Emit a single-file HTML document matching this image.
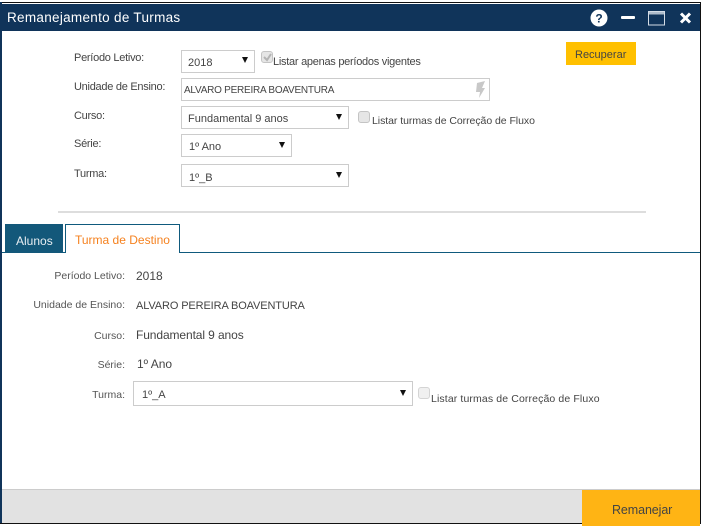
<!DOCTYPE html>
<html><head><meta charset="utf-8"><style>
html,body{margin:0;padding:0;background:#fff}
body{width:703px;height:526px;position:relative;overflow:hidden;font-family:"Liberation Sans",sans-serif;font-size:11px;color:#444}
div{position:absolute;box-sizing:border-box}
.t{white-space:nowrap;line-height:14px}
.n{letter-spacing:-.27px}
.f{background:#fff;border:1px solid #ccc}
.a{position:absolute;width:0;height:0;border-left:3.5px solid transparent;border-right:3.5px solid transparent;border-top:6px solid #111}
.c{width:12px;height:12px;border:1px solid #c4c4c4;border-radius:3px;background:#e6e6e6}
</style></head><body>
<div style="left:0;top:2px;width:701px;height:1px;background:#111"></div>
<div style="left:0;top:2px;width:2px;height:522px;background:#10345a"></div>
<div style="left:700px;top:2px;width:1px;height:522px;background:#111"></div>
<div style="left:0;top:4px;width:700px;height:27px;background:#10345a"></div>
<div class="t" style="left:7px;top:11px;color:#fff;font-size:13.5px;letter-spacing:.3px">Remanejamento de Turmas</div>
<svg style="position:absolute;left:585px;top:5px" width="110" height="26" viewBox="0 0 110 26">
<circle cx="14" cy="13" r="8.5" fill="#fff"/>
<text x="14" y="17.5" text-anchor="middle" font-family="Liberation Sans" font-weight="bold" font-size="12" fill="#10345a">?</text>
<rect x="36" y="11" width="14" height="3" rx="1" fill="#fff"/>
<rect x="63.5" y="6.5" width="16" height="13.5" fill="none" stroke="#d4dde6" stroke-width="1"/>
<rect x="64" y="7" width="15" height="2.5" fill="#aebccb"/>
<path d="M96 8.500l9 9M105 8.500l-9 9" stroke="#fff" stroke-width="3"/>
</svg>
<div class="t n" style="left:74px;top:51px">Período Letivo:</div>
<div class="f" style="left:181px;top:50px;width:74px;height:23px"></div>
<div class="t" style="left:188px;top:56px">2018</div><div class="a" style="left:242px;top:57px"></div>
<div class="c" style="left:261px;top:51px"></div>
<svg style="position:absolute;left:262px;top:52px" width="12" height="12"><path d="M2 5l3 3 4-6" fill="none" stroke="#b4b4b4" stroke-width="2"/></svg>
<div class="t n" style="left:273px;top:55px">Listar apenas períodos vigentes</div>
<div style="left:566px;top:42px;width:70px;height:23px;background:#ffc000"></div>
<div class="t" style="left:575px;top:48px;color:#444">Recuperar</div>
<div class="t n" style="left:74px;top:80px">Unidade de Ensino:</div>
<div class="f" style="left:181px;top:78px;width:309px;height:23px"></div>
<div class="t" style="left:184px;top:84px;font-size:10px;letter-spacing:-.24px">ALVARO PEREIRA BOAVENTURA</div>
<svg style="position:absolute;left:476px;top:81px" width="10" height="18"><path d="M9 0L1 2L0 11H4L3 17L9 7H6Z" fill="#c8c8c8"/></svg>
<div class="t n" style="left:74px;top:109px">Curso:</div>
<div class="f" style="left:181px;top:106px;width:168px;height:23px"></div>
<div class="t" style="left:188px;top:112px">Fundamental 9 anos</div><div class="a" style="left:336px;top:114px"></div>
<div class="c" style="left:358px;top:111px"></div>
<div class="t" style="left:372px;top:114px;font-size:10.5px;letter-spacing:-.05px">Listar turmas de Correção de Fluxo</div>
<div class="t n" style="left:74px;top:137px">Série:</div>
<div class="f" style="left:181px;top:134px;width:111px;height:23px"></div>
<div class="t" style="left:189px;top:140px">1º Ano</div><div class="a" style="left:279px;top:142px"></div>
<div class="t n" style="left:74px;top:167px">Turma:</div>
<div class="f" style="left:181px;top:164px;width:168px;height:23px"></div>
<div class="t" style="left:189px;top:171px">1º_B</div><div class="a" style="left:336px;top:172px"></div>
<div style="left:58px;top:211px;width:588px;height:2px;background:#ddd"></div>
<div style="left:2px;top:252px;width:698px;height:1px;background:#0f5a7d"></div>
<div style="left:5px;top:224px;width:58px;height:29px;background:#13587a"></div>
<div class="t" style="left:16px;top:234px;color:#e8eef2;font-size:12px">Alunos</div>
<div style="left:65px;top:224px;width:115px;height:29px;background:#fff;border:1px solid #0f5a7d;border-bottom:0"></div>
<div class="t" style="left:75px;top:233px;color:#f58220;font-size:12px">Turma de Destino</div>
<div class="t" style="right:578px;top:269px;color:#555;font-size:10.5px">Período Letivo:</div>
<div class="t" style="left:136px;top:269px;font-size:12px">2018</div>
<div class="t" style="right:578px;top:298px;color:#555;font-size:10.5px">Unidade de Ensino:</div>
<div class="t" style="left:136px;top:299px;font-size:11px;letter-spacing:-.12px">ALVARO PEREIRA BOAVENTURA</div>
<div class="t" style="right:578px;top:329px;color:#555;font-size:10.5px">Curso:</div>
<div class="t" style="left:136px;top:328px;font-size:12px;letter-spacing:-.1px">Fundamental 9 anos</div>
<div class="t" style="right:578px;top:358px;color:#555;font-size:10.5px">Série:</div>
<div class="t" style="left:137px;top:357px;font-size:12px">1º Ano</div>
<div class="t" style="right:578px;top:388px;color:#555;font-size:10.5px">Turma:</div>
<div class="f" style="left:133px;top:381px;width:280px;height:25px"></div>
<div class="t" style="left:142px;top:388px">1º_A</div><div class="a" style="left:400px;top:390px"></div>
<div class="c" style="left:418px;top:387px;background:#f0f0f0;border-color:#d4d4d4"></div>
<div class="t" style="left:431px;top:392px;font-size:10.5px;letter-spacing:.12px">Listar turmas de Correção de Fluxo</div>
<div style="left:2px;top:489px;width:698px;height:34px;background:#e2e2e2;border-top:1px solid #ccc"></div>
<div style="left:0;top:523px;width:701px;height:1px;background:#111"></div>
<div style="left:582px;top:490px;width:118px;height:36px;background:#ffb414"></div>
<div class="t" style="left:612px;top:503px;font-size:12.5px;color:#444;letter-spacing:-.1px">Remanejar</div>
</body></html>
